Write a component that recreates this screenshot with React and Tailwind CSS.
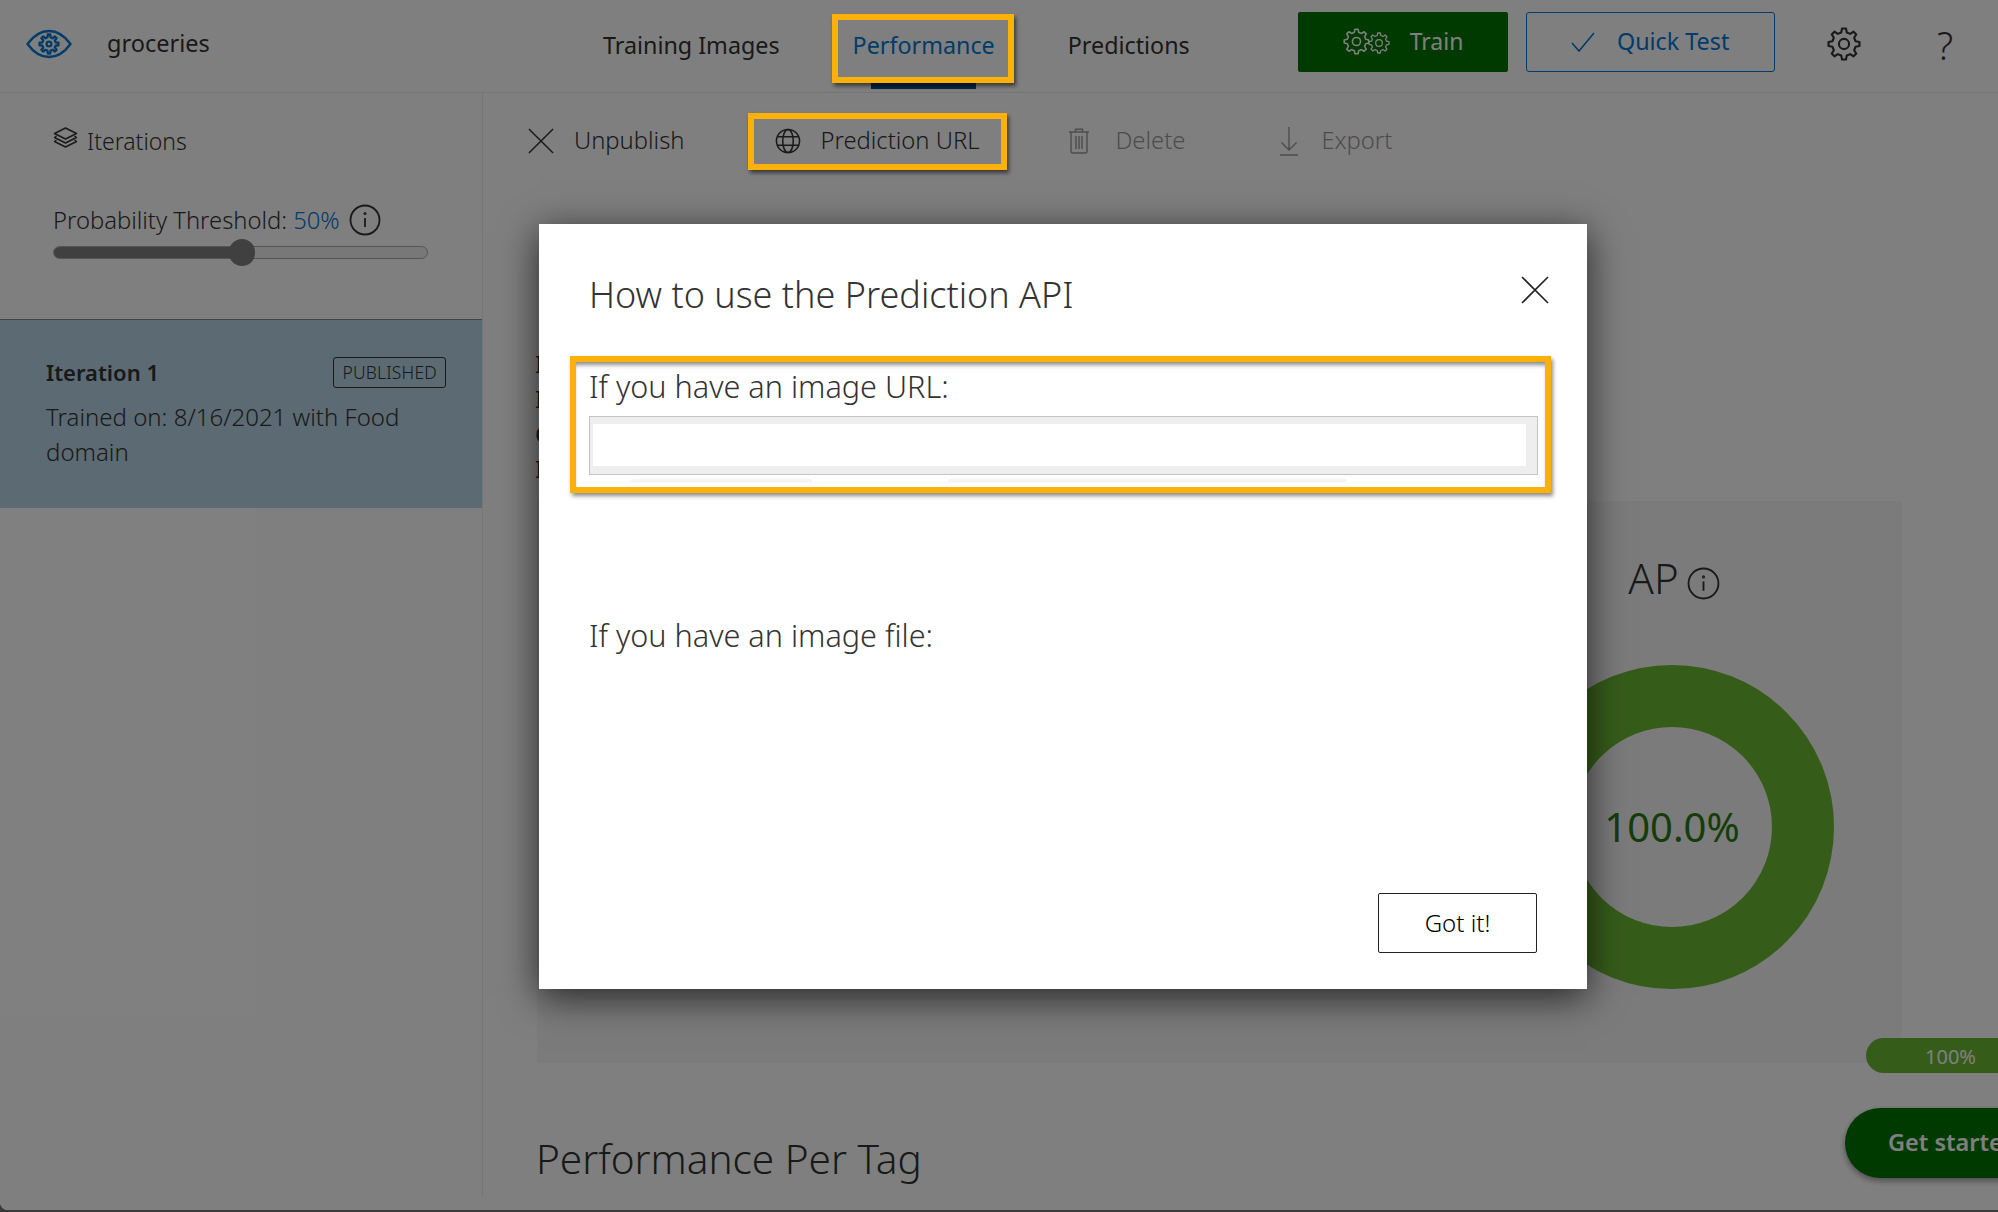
import React from 'react';

const font = { fontFamily: '"Noto Sans", "Open Sans", sans-serif' };

// teeth outline for the gear icons
const gearPath = (cx, cy, outer, inner, teeth) => {
  const step = (Math.PI * 2) / teeth;
  const pts = [];
  for (let i = 0; i < teeth; i++) {
    const a = i * step - Math.PI / 2;
    const w = step * 0.2;
    const p = (r, t) => `${(cx + r * Math.cos(t)).toFixed(2)} ${(cy + r * Math.sin(t)).toFixed(2)}`;
    pts.push(p(inner, a - w * 1.5), p(outer, a - w * 0.8), p(outer, a + w * 0.8), p(inner, a + w * 1.5));
  }
  return `M${pts.join('L')}Z`;
};

const Gear = ({ size, outer = 11, inner = 8.4, hole = 3.6, stroke = 1.4, className }) => (
  <svg width={size} height={size} viewBox="0 0 24 24" fill="none" stroke="currentColor" strokeWidth={stroke} strokeLinejoin="round" className={className}>
    <path d={gearPath(12, 12, outer, inner, 8)} />
    <circle cx="12" cy="12" r={hole} />
  </svg>
);

const ThinX = ({ size, className }) => (
  <svg width={size} height={size} viewBox="0 0 28 28" stroke="currentColor" strokeWidth="1.6" className={className}>
    <path d="M1 1 27 27M27 1 1 27" />
  </svg>
);

const InfoCircle = ({ size, className }) => (
  <svg width={size} height={size} viewBox="0 0 32 32" fill="none" stroke="currentColor" strokeWidth="1.8" className={className}>
    <circle cx="16" cy="16" r="14.5" />
    <path d="M16 14v9" />
    <circle cx="16" cy="9.6" r="0.6" />
  </svg>
);

const EyeLogo = () => (
  <svg width="46" height="30" viewBox="0 0 46 30" fill="none" stroke="#0078d4" className="ml-[26px] shrink-0">
    <path d="M1.5 15C8 6 15 2 23 2s15 4 21.5 13C38 24 31 28 23 28S8 24 1.5 15Z" strokeWidth="2.4" strokeLinejoin="round" />
    <path d={gearPath(23, 15, 9.5, 6.8, 8)} strokeWidth="2.4" strokeLinejoin="round" />
    <circle cx="23" cy="15" r="2.4" strokeWidth="2.4" />
  </svg>
);

const LayersIcon = () => (
  <svg width="25" height="21" viewBox="0 0 25 21" fill="none" stroke="currentColor" strokeWidth="1.4" strokeLinejoin="round" className="mt-[-8px] shrink-0">
    <path d="M12.5 1 23.5 6.5 12.5 12 1.5 6.5Z" />
    <path d="M3.5 9 1.5 10.5 12.5 16 23.5 10.5 21.5 9" />
    <path d="M3.5 13 1.5 14.5 12.5 20 23.5 14.5 21.5 13" />
  </svg>
);

const GlobeIcon = () => (
  <svg width="26" height="26" viewBox="0 0 27 27" fill="none" stroke="currentColor" strokeWidth="1.6" className="shrink-0">
    <circle cx="13.5" cy="13.5" r="12" />
    <ellipse cx="13.5" cy="13.5" rx="5.5" ry="12" />
    <path d="M2.5 9h22M2.5 18h22" />
  </svg>
);

const TrashIcon = () => (
  <svg width="20" height="26" viewBox="0 0 20 26" fill="none" stroke="currentColor" strokeWidth="1.4" className="shrink-0">
    <path d="M0 4h20M6.5 4V1.2h7V4M2 4v19.5a1.5 1.5 0 0 0 1.5 1.5h13a1.5 1.5 0 0 0 1.5-1.5V4" />
    <path d="M7 8v13M10 8v13M13 8v13" />
  </svg>
);

const ExportIcon = () => (
  <svg width="18" height="29" viewBox="0 0 18 29" fill="none" stroke="currentColor" strokeWidth="1.4" className="shrink-0">
    <path d="M9 0v23M1.5 15.5 9 23l7.5-7.5M0 28h18" />
  </svg>
);

const App = () => {
  return (
    <div className="relative w-[1998px] h-[1212px] overflow-hidden bg-[#3a3a3a]" style={font}>
      <div className="relative flex flex-col h-[1210px] overflow-hidden rounded-bl-[8px] bg-white text-[#333]">
        {/* Header */}
        <header className="flex h-[93px] shrink-0 items-center border-b border-[#eaeaea]">
          <div className="flex w-[603px] items-center shrink-0 mt-[-4px]">
            <EyeLogo />
            <span className="ml-[35px] text-[23.5px]">groceries</span>
          </div>
          <nav className="flex w-[695px] shrink-0 gap-[73px] text-[23.3px] mt-[-1px]">
            <span>Training Images</span>
            <span className="text-[#0078d4]">Performance</span>
            <span>Predictions</span>
          </nav>
          <button className="flex h-[60px] w-[210px] shrink-0 items-center justify-center mt-[-9px] rounded-[2px] bg-[#007400] text-[23px] text-white">
            <Gear size={27} className="mr-[-2px]" />
            <Gear size={22} className="mt-[3px]" />
            <span className="ml-[20px]">Train</span>
          </button>
          <button className="ml-[18px] flex h-[60px] w-[249px] shrink-0 items-center mt-[-9px] rounded-[3px] border border-[#0078d4] pl-[44px] text-[23.3px] text-[#0078d4]">
            <svg width="24" height="20" viewBox="0 0 24 20" fill="none" stroke="currentColor" strokeWidth="1.6"><path d="M1 11l7 8L23 1" /></svg>
            <span className="ml-[22px]">Quick Test</span>
          </button>
          <Gear size={34} stroke={1.5} className="ml-[52px] mt-[-4px] shrink-0" />
          <span className="ml-[76px] text-[38px] font-light leading-none mt-[-2px]">?</span>
        </header>

        <div className="flex flex-1 min-h-0">
          {/* Sidebar */}
          <aside className="w-[483px] shrink-0 h-[1103px] border-r border-[#ebebeb]">
            <div className="h-[226px] pl-[53px]">
              <div className="flex items-center gap-[9px] pt-[31px] text-[23px] font-light">
                <LayersIcon />
                <span>Iterations</span>
              </div>
              <div className="mt-[44px] flex items-center text-[23.8px] font-light">
                <span>Probability Threshold:</span>
                <span className="ml-[6px] text-[#0078d4]">50%</span>
                <InfoCircle size={32} className="ml-[9px]" />
              </div>
              <div className="relative mt-[8px] h-[13px] w-[375px] rounded-full border border-[#aaa] bg-[#f0f0f0]">
                <div className="h-full w-[190px] rounded-l-full bg-[#808080]"></div>
                <div className="absolute left-[175px] top-[-8px] h-[27px] w-[26px] rounded-full bg-[#808080]"></div>
              </div>
            </div>
            <div className="h-[189px] w-[482px] border-t border-[#888] bg-[#b8d4e6] pl-[46px] pr-[36px] pt-[36px]">
              <div className="flex items-center justify-between">
                <span className="text-[22px] font-semibold">Iteration 1</span>
                <span className="rounded-[3px] border border-[#333] px-[8px] py-[3px] text-[17.5px] leading-[23px] font-light tracking-[0.2px]">PUBLISHED</span>
              </div>
              <p className="mt-[10px] text-[24px] leading-[35px] font-light">Trained on: 8/16/2021 with Food domain</p>
            </div>
          </aside>

          {/* Main content */}
          <main className="flex-1 min-w-0">
            <div className="flex h-[96px] items-center pl-[45px] text-[23.8px]">
              <ThinX size={26} />
              <span className="ml-[20px] font-light">Unpublish</span>
              <span className="ml-[90px]"><GlobeIcon /></span>
              <span className="ml-[20px] font-light">Prediction URL</span>
              <div className="ml-[90px] flex items-center text-[#999]">
                <TrashIcon />
                <span className="ml-[26px] font-light">Delete</span>
                <span className="ml-[95px]"><ExportIcon /></span>
                <span className="ml-[23px] font-light">Export</span>
              </div>
            </div>

            <div className="mt-[157px] pl-[52px] text-[24px] leading-[35px]">
              <p>Iteration id</p>
              <p>Iteration</p>
              <p>Classification</p>
              <p>Iteration</p>
            </div>

            <section className="mt-[15px] ml-[54px] flex h-[562px] w-[1365px] justify-end bg-[#f6f6f6]">
              <div className="flex w-[460px] flex-col items-center">
                <div className="mt-[46px] flex h-[60px] items-center ml-[4px]">
                  <span className="text-[42px] font-light">AP</span>
                  <InfoCircle size={33} className="ml-[8px] mt-[12px]" />
                </div>
                <div className="relative mt-[58px] h-[324px] w-[324px]">
                  <svg width="324" height="324" viewBox="0 0 324 324" fill="none">
                    <circle cx="162" cy="162" r="131" stroke="#6cb834" strokeWidth="62" />
                  </svg>
                  <div className="absolute inset-0 flex items-center justify-center text-[40px] text-[#2a7a14]">100.0%</div>
                </div>
              </div>
            </section>

            <h2 className="mt-[68px] pl-[53px] text-[40.5px] font-light leading-[56px]">Performance Per Tag</h2>
          </main>
        </div>

        {/* Floating widgets */}
        <div className="absolute left-[1866px] top-[1038px] flex h-[35px] w-[132px] items-center rounded-l-full bg-[#6cb834] pl-[59px] pt-[2px] text-[20px] text-white">100%</div>
        <div className="absolute left-[1845px] top-[1108px] flex h-[70px] w-[260px] items-center rounded-full bg-[#007400] pl-[43px] text-[23.5px] font-semibold whitespace-nowrap text-white shadow-[0_3px_6px_rgba(0,0,0,0.4)]">Get started</div>

        {/* active tab marker */}
        <div className="absolute left-[871px] top-[83px] h-[6px] w-[105px] bg-[#004c87]"></div>

        {/* Dim layer */}
        <div className="absolute inset-0 bg-black/50"></div>

        {/* Tutorial highlights */}
        <div className="absolute left-[832px] top-[14px] h-[69px] w-[182px] border-[6px] border-[#fcb00a] shadow-[2px_3px_4px_rgba(0,0,0,0.55)]"></div>
        <div className="absolute left-[748px] top-[113px] h-[57px] w-[259px] border-[6px] border-[#fcb00a] shadow-[2px_3px_4px_rgba(0,0,0,0.55)]"></div>

        {/* Modal */}
        <div className="absolute left-[539px] top-[224px] flex h-[765px] w-[1048px] flex-col bg-white pl-[50px] pr-[50px] pb-[36px] text-[#333] shadow-[0_8px_36px_rgba(0,0,0,0.7)]">
          <div className="flex items-start justify-between pt-[44px]">
            <h1 className="text-[36px] font-light leading-[54px]">How to use the Prediction API</h1>
            <ThinX size={28} className="mt-[8px] mr-[-12px] text-[#222]" />
          </div>
          <label className="mt-[44px] text-[30.6px] font-light leading-[40px]">If you have an image URL:</label>
          <div className="mt-[10px] h-[59px] w-[949px] border border-[#c4c4c4] bg-[#eeeeee] pl-[3px] pr-[11px] pt-[7px] pb-[8px]">
            <div className="h-full w-full bg-white"></div>
          </div>
          <div className="mt-[4px] flex h-[3px] pl-[42px]">
            <div className="h-full w-[181px] rounded-t-[3px] bg-[#f8f0f4]"></div>
            <div className="ml-[136px] h-full w-[399px] rounded-t-[3px] bg-[#f8f0f4]"></div>
          </div>
          <label className="mt-[133px] text-[30.6px] font-light leading-[40px]">If you have an image file:</label>
          <div className="mt-auto flex justify-end">
            <button className="h-[60px] w-[159px] rounded-[2px] border border-[#222] text-[24px] font-light text-black">Got it!</button>
          </div>
          <div className="absolute left-[31px] top-[132px] h-[137px] w-[981px] border-[6px] border-[#fcb00a] shadow-[2px_3px_4px_rgba(0,0,0,0.45),inset_0_5px_4px_-2px_rgba(0,0,0,0.45)]"></div>
        </div>
      </div>
    </div>
  );
};

export default App;
